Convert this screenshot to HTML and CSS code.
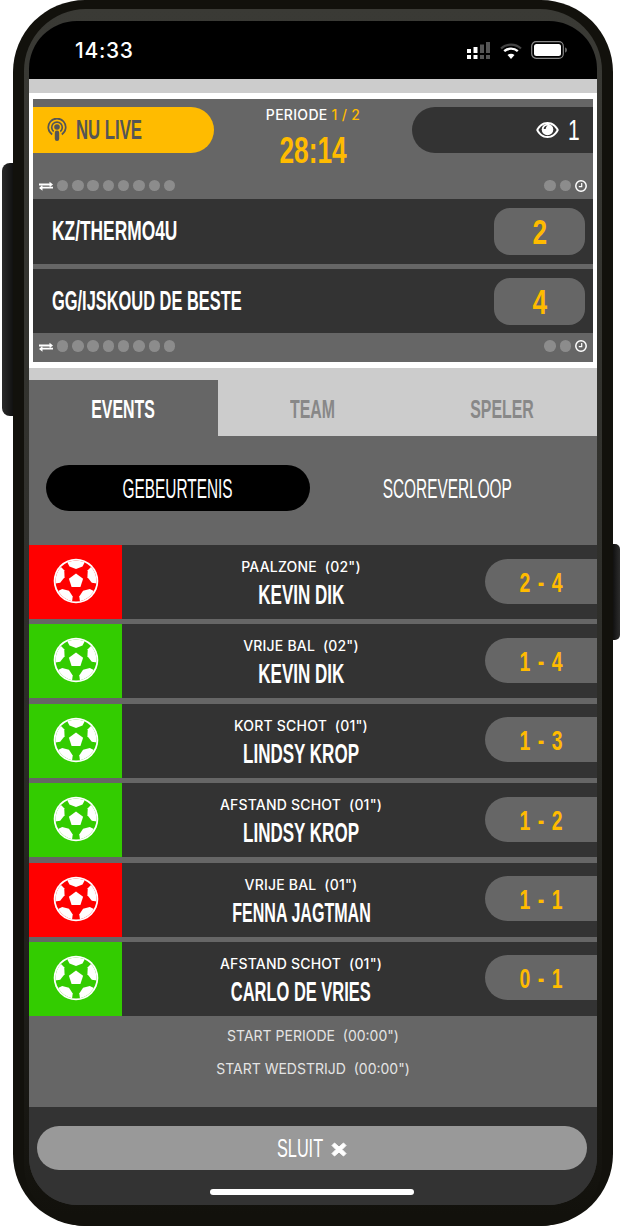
FILE: index.html
```html
<!DOCTYPE html>
<html lang="nl">
<head>
<meta charset="utf-8">
<title>Wedstrijd</title>
<link rel="stylesheet" href="styles.css">
</head>
<body>
<svg class="defs" width="0" height="0" aria-hidden="true">
  <defs>
    <clipPath id="ballclip"><circle cx="0" cy="0" r="20.5"/></clipPath>
    <symbol id="ball" viewBox="-23 -23 46 46">
      <circle r="22.300" fill="#fff"/>
      <circle r="20.500" fill="currentColor"/>
      <polygon points="0,-7.500 7.100,-2.300 4.400,6.100 -4.400,6.100 -7.100,-2.300" fill="#fff"/>
      <g clip-path="url(#ballclip)" fill="#fff">
        <polygon points="-11,-23 11,-23 6.500,-14.500 0,-12 -6.500,-14.500"/>
        <polygon points="-11,-23 11,-23 6.500,-14.500 0,-12 -6.500,-14.500" transform="rotate(72)"/>
        <polygon points="-11,-23 11,-23 6.500,-14.500 0,-12 -6.500,-14.500" transform="rotate(144)"/>
        <polygon points="-11,-23 11,-23 6.500,-14.500 0,-12 -6.500,-14.500" transform="rotate(216)"/>
        <polygon points="-11,-23 11,-23 6.500,-14.500 0,-12 -6.500,-14.500" transform="rotate(288)"/>
      </g>
    </symbol>
    <symbol id="swap" viewBox="0 0 14 10">
      <path d="M0 2.600h10.500V.8L14 3.500 10.500 6.200V4.400H0zM14 5.800H3.500V4L0 7 3.500 9.800V7.600H14z" fill="#fff"/>
    </symbol>
    <symbol id="clock" viewBox="0 0 12 12">
      <circle cx="6" cy="6" r="5.200" fill="none" stroke="#fff" stroke-width="1.500"/>
      <path d="M6.700 3v3.700H3.800" fill="none" stroke="#fff" stroke-width="1.200"/>
    </symbol>
  </defs>
</svg>

<div class="device">
  <div class="side side-left"></div>
  <div class="phone">
    <div class="ring">
      <div class="screen">
        <header class="status">
          <span class="time">14:33</span>
          <div class="status-icons">
            <svg class="signal" width="24" height="17" viewBox="0 0 24 17">
              <g fill="#fff">
                <rect x="0" y="7" width="4" height="4"/><rect x="6.500" y="5" width="4" height="6"/>
                <rect x="0" y="13" width="4" height="4"/><rect x="6.500" y="13" width="4" height="4"/>
              </g>
              <g fill="#555">
                <rect x="13" y="2.500" width="4" height="8.500"/><rect x="19" y="0" width="4" height="11"/>
                <rect x="13" y="13" width="4" height="4"/><rect x="19" y="13" width="4" height="4"/>
              </g>
            </svg>
            <svg class="wifi" width="22" height="17" viewBox="0 0 22 17">
              <path d="M1 6.500C6.500 1.200 15.500 1.200 21 6.500" fill="none" stroke="#444" stroke-width="2.200"/>
              <path d="M4.200 9.200C8 5.800 14 5.800 17.800 9.200" fill="none" stroke="#fff" stroke-width="2.400"/>
              <path d="M11 17 7.500 13C9.500 11.300 12.500 11.300 14.500 13z" fill="#fff"/>
            </svg>
            <svg class="battery" width="37" height="18" viewBox="0 0 37 18">
              <rect x=".7" y=".7" width="31.600" height="16.600" rx="4.500" fill="none" stroke="#888" stroke-width="1.200"/>
              <rect x="3" y="3" width="27" height="12" rx="2.500" fill="#fff"/>
              <path d="M34 6.500c1.500.3 2 1.300 2 2.500s-.5 2.200-2 2.500z" fill="#666"/>
            </svg>
          </div>
        </header>

        <div class="strip strip-top"></div>
        <div class="board-frame">
          <section class="board">
            <div class="board-head">
              <div class="live">
                <svg class="podcast" width="20" height="24" viewBox="0 0 20 24">
                  <path d="M5.200 16.500A8.700 8.700 0 1 1 14.800 16.500" fill="none" stroke="#555" stroke-width="1.700"/>
                  <path d="M6.700 13.500A5.300 5.300 0 1 1 13.300 13.500" fill="none" stroke="#555" stroke-width="1.700"/>
                  <circle cx="10" cy="9" r="2.800" fill="#555"/>
                  <rect x="7.800" y="12.500" width="4.400" height="10.500" rx="2.200" fill="#555"/>
                </svg>
                <span class="live-text">NU LIVE</span>
              </div>
              <div class="clockbox">
                <div class="period">PERIODE <em>1 / 2</em></div>
                <div class="gametime"><span>28:14</span></div>
              </div>
              <div class="viewers">
                <svg class="eye" width="23" height="18" viewBox="0 0 23 18">
                  <path d="M11.500 1C6.300 1 2.300 4.400 .2 9c2.100 4.600 6.100 8 11.300 8s9.200-3.400 11.300-8C20.700 4.400 16.700 1 11.500 1z" fill="#fff"/>
                  <path d="M11.500 2.900C7.400 2.900 4.300 5.400 2.400 9c1.900 3.600 5 6.100 9.100 6.100s7.200-2.500 9.100-6.100C18.700 5.400 15.600 2.900 11.500 2.900z" fill="#333"/>
                  <circle cx="11.500" cy="8.500" r="5.800" fill="#fff"/>
                  <path d="M7.600 7.400c.6-1.900 2.300-3 4.200-2.900-1.300.7-2 1.900-2.100 3.500-.8.300-1.700 0-2.100-.6z" fill="#333"/>
                </svg>
                <span class="viewer-count">1</span>
              </div>
            </div>
            <div class="markers markers-top">
              <div class="marker-group">
                <svg class="swap"><use href="#swap"/></svg>
                <i></i><i></i><i></i><i></i><i></i><i></i><i></i><i></i>
              </div>
              <div class="marker-group">
                <i></i><i></i>
                <svg class="clock"><use href="#clock"/></svg>
              </div>
            </div>
            <div class="team team-a">
              <span class="team-name">KZ/THERMO4U</span>
              <span class="team-score"><span>2</span></span>
            </div>
            <div class="team">
              <span class="team-name team-name-long">GG/IJSKOUD DE BESTE</span>
              <span class="team-score"><span>4</span></span>
            </div>
            <div class="markers markers-bottom">
              <div class="marker-group">
                <svg class="swap"><use href="#swap"/></svg>
                <i></i><i></i><i></i><i></i><i></i><i></i><i></i><i></i>
              </div>
              <div class="marker-group">
                <i></i><i></i>
                <svg class="clock"><use href="#clock"/></svg>
              </div>
            </div>
          </section>
        </div>
        <div class="strip strip-mid"></div>

        <nav class="tabs">
          <div class="tab tab-on"><span>EVENTS</span></div>
          <div class="tab"><span>TEAM</span></div>
          <div class="tab"><span>SPELER</span></div>
        </nav>

        <main class="content">
          <div class="subtabs">
            <div class="subtab subtab-on"><span>GEBEURTENIS</span></div>
            <div class="subtab"><span>SCOREVERLOOP</span></div>
          </div>
          <ul class="events">
            <li class="event">
              <div class="event-icon red"><svg class="ball"><use href="#ball"/></svg></div>
              <div class="event-text"><div class="event-label">PAALZONE &nbsp;(02")</div><div class="event-name"><span>KEVIN DIK</span></div></div>
              <div class="event-score"><span>2 - 4</span></div>
            </li>
            <li class="event">
              <div class="event-icon green"><svg class="ball"><use href="#ball"/></svg></div>
              <div class="event-text"><div class="event-label">VRIJE BAL &nbsp;(02")</div><div class="event-name"><span>KEVIN DIK</span></div></div>
              <div class="event-score"><span>1 - 4</span></div>
            </li>
            <li class="event">
              <div class="event-icon green"><svg class="ball"><use href="#ball"/></svg></div>
              <div class="event-text"><div class="event-label">KORT SCHOT &nbsp;(01")</div><div class="event-name"><span>LINDSY KROP</span></div></div>
              <div class="event-score"><span>1 - 3</span></div>
            </li>
            <li class="event">
              <div class="event-icon green"><svg class="ball"><use href="#ball"/></svg></div>
              <div class="event-text"><div class="event-label">AFSTAND SCHOT &nbsp;(01")</div><div class="event-name"><span>LINDSY KROP</span></div></div>
              <div class="event-score"><span>1 - 2</span></div>
            </li>
            <li class="event">
              <div class="event-icon red"><svg class="ball"><use href="#ball"/></svg></div>
              <div class="event-text"><div class="event-label">VRIJE BAL &nbsp;(01")</div><div class="event-name"><span class="fit-narrow">FENNA JAGTMAN</span></div></div>
              <div class="event-score"><span>1 - 1</span></div>
            </li>
            <li class="event">
              <div class="event-icon green"><svg class="ball"><use href="#ball"/></svg></div>
              <div class="event-text"><div class="event-label">AFSTAND SCHOT &nbsp;(01")</div><div class="event-name"><span class="fit-slim">CARLO DE VRIES</span></div></div>
              <div class="event-score"><span>0 - 1</span></div>
            </li>
          </ul>
          <div class="notes">
            <div class="note">START PERIODE &nbsp;(00:00")</div>
            <div class="note">START WEDSTRIJD &nbsp;(00:00")</div>
          </div>
        </main>

        <footer class="foot">
          <div class="close"><span class="close-text">SLUIT</span> <svg class="x" width="16" height="15" viewBox="0 0 16 15"><path d="M1 3.500 3.500 1 8 5 12.500 1 15 3.500 11 7.500 15 11.500 12.500 14 8 10 3.500 14 1 11.500 5 7.500z" fill="#fff" stroke="#fff" stroke-width="1" stroke-linejoin="round"/></svg></div>
          <div class="home"></div>
        </footer>
      </div>
    </div>
  </div>
  <div class="side side-right"></div>
</div>
</body>
</html>
```

FILE: styles.css
```css
* { box-sizing: border-box; }
html, body { margin: 0; padding: 0; background: #fff; }
body { width: 621px; height: 1227px; overflow: hidden; font-family: "Liberation Sans", sans-serif; }
.defs { position: absolute; }

.device { display: flex; align-items: flex-start; padding-left: 2px; }
.side { background: linear-gradient(90deg, #2a2a2a, #1c1c1c 60%, #111); flex: none; }
.side-left { width: 11px; height: 253px; margin-top: 163px; border-radius: 8px 0 0 8px; }
.side-right { width: 7px; height: 96px; margin-top: 544px; border-radius: 0 5px 5px 0; background: linear-gradient(90deg, #111, #2c2c2c); }

.phone { flex: none; width: 600px; height: 1226px; background: #12110c; border-radius: 72px; padding: 9px 11px 0; }
.ring { height: 1217px; border-radius: 62px; padding: 12px 5px 0; background: linear-gradient(180deg, #3a3a35 0, #2c2c28 60%, #12110c 99%); }
.screen { width: 568px; height: 1184px; border-radius: 48px; overflow: hidden; background: #333; display: flex; flex-direction: column; }

.status { flex: none; height: 58px; background: #000; display: flex; justify-content: space-between; align-items: flex-start; padding: 17px 29px 0 46px; }
.time { color: #fff; font: 500 21px/26px "Inter", sans-serif; letter-spacing: .7px; }
.status-icons { display: flex; align-items: center; gap: 9px; padding-top: 3px; }
.status-icons svg { display: block; }

.strip { flex: none; background: #ccc; }
.strip-top { height: 14px; }
.strip-mid { height: 12px; }
.board-frame { flex: none; background: #fff; padding: 6px 4px 6px 4px; }
.board { height: 263px; background: #666; }
.board-head { display: flex; justify-content: space-between; padding-top: 8px; height: 54px; }
.live { width: 181px; height: 46px; background: #ffbb00; border-radius: 0 23px 23px 0; display: flex; align-items: center; gap: 9px; padding-left: 14px; color: #555; }
.live-text { display: inline-block; font: 700 27px/48px "Liberation Sans", sans-serif; white-space: nowrap; transform: scaleX(.62); transform-origin: left center; }
.podcast { display: block; flex: none; }
.clockbox { text-align: center; width: 190px; }
.period { color: #fff; font: 500 14px/16px "Inter", sans-serif; letter-spacing: .3px; }
.period em { font-style: normal; color: #ffbb00; }
.gametime { color: #ffbb00; font: 700 36px/40px "Liberation Sans", sans-serif; margin-top: 8px; }
.gametime span { display: inline-block; transform: scaleX(.73); }
.viewers { width: 181px; height: 46px; background: #333; border-radius: 23px 0 0 23px; display: flex; align-items: center; justify-content: flex-end; gap: 4px; padding-right: 13px; color: #fff; }
.viewer-count { display: inline-block; font: 400 30px/46px "Liberation Sans", sans-serif; transform: scaleX(.7); transform-origin: right center; }

.markers { display: flex; justify-content: space-between; align-items: center; padding: 0 6px; }
.markers-top { height: 46px; padding-top: 19px; }
.markers-bottom { height: 26px; }
.marker-group { display: flex; align-items: center; gap: 3.800px; }
.marker-group i { width: 11.500px; height: 11.500px; border-radius: 50%; background: #8c8c8c; display: block; }
.swap { width: 14px; height: 10px; display: block; margin-top: 1px; }
.clock { width: 12px; height: 12px; display: block; }

.team { height: 64px; background: #333; display: flex; align-items: center; justify-content: space-between; padding: 0 8px 0 19px; }
.team-a { height: 65px; margin-bottom: 5px; }
.team-name { display: inline-block; margin-top: -1px; color: #fff; font: 700 28px/32px "Liberation Sans", sans-serif; white-space: nowrap; transform: scaleX(.62); transform-origin: left center; }
.team-name-long { transform: scaleX(.586); }
.team-score { width: 91px; height: 47px; background: #666; border-radius: 16px; color: #ffbb00; text-align: center; font: 700 35px/47px "Liberation Sans", sans-serif; }
.team-score span { display: inline-block; transform: scaleX(.75); }

.tabs { flex: none; display: grid; grid-template-columns: 189px 189px 190px; height: 56px; background: #ccc; }
.tab { text-align: center; color: #888; font: 700 26.500px/59px "Liberation Sans", sans-serif; }
.tab span { display: inline-block; transform: scaleX(.6); }
.tab-on { background: #666; color: #fff; }

.content { flex: none; height: 671px; background: #666; padding-top: 29px; }
.subtabs { display: flex; padding: 0 12px 0 17px; margin-bottom: 34px; }
.subtab { width: 275px; height: 46px; color: #fff; text-align: center; font: 400 27px/49px "Liberation Sans", sans-serif; white-space: nowrap; }
.subtab span { display: inline-block; transform: scaleX(.57); }
.subtab-on { width: 264px; background: #000; border-radius: 23px; }

.events { list-style: none; margin: 0; padding: 0; display: flex; flex-direction: column; gap: 5.400px; }
.event { height: 74px; background: #333; display: grid; grid-template-columns: 93px 1fr 112px; align-items: center; }
.event-icon { height: 74px; padding-bottom: 2px; display: flex; align-items: center; justify-content: center; }
.red { background: #ff0000; color: #ff0000; }
.green { background: #33cc00; color: #33cc00; }
.ball { width: 46px; height: 46px; display: block; }
.event-text { text-align: center; padding-right: 5px; margin-top: 5px; }
.event-label { color: #fff; font: 500 14px/16px "Inter", sans-serif; letter-spacing: .2px; }
.event-name { color: #fff; font: 700 27px/30px "Liberation Sans", sans-serif; margin-top: 5px; white-space: nowrap; }
.event-name span { display: inline-block; transform: scaleX(.63); }
.event-name .fit-narrow { transform: scaleX(.595); }
.event-name .fit-slim { transform: scaleX(.61); }
.event-score { height: 45px; margin-bottom: 2px; background: #666; border-radius: 22.500px 0 0 22.500px; color: #ffbb00; text-align: center; font: 700 27px/48px "Liberation Sans", sans-serif; word-spacing: 3px; }
.event-score span { display: inline-block; transform: scaleX(.72); }

.notes { padding-top: 3px; }
.note { color: #e4e4e4; text-align: center; font: 400 14px/33px "Inter", sans-serif; }

.foot { flex: 1; background: #333; padding: 19px 10px 0 8px; display: flex; flex-direction: column; align-items: center; }
.close { width: 550px; height: 44px; border-radius: 22px; background: #999; color: #fff; display: flex; align-items: center; justify-content: center; gap: 7px; }
.close-text { display: inline-block; font: 400 25px/47px "Liberation Sans", sans-serif; transform: scaleX(.65); transform-origin: left center; margin-right: -24px; }
.x { display: block; margin-top: 2px; }
.home { width: 204px; height: 6px; border-radius: 3px; background: #fff; margin-top: 19px; }
```
